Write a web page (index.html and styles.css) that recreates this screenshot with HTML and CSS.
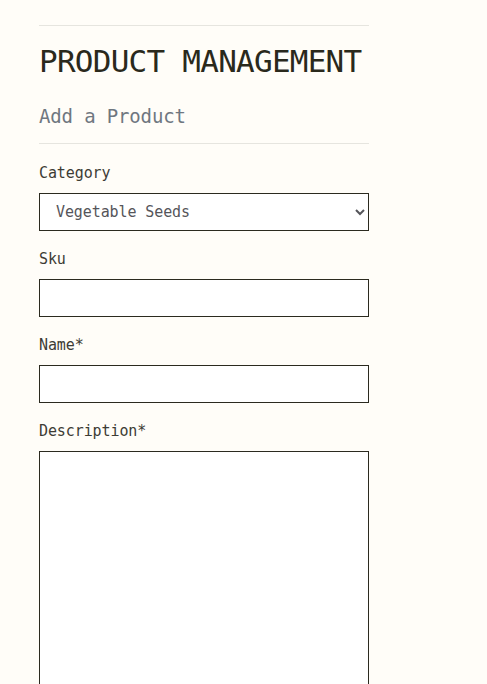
FILE: index.html
```html
<!DOCTYPE html>
<html lang="en">
<head>
<meta charset="utf-8">
<title>Product Management</title>
<link rel="stylesheet" href="styles.css">
</head>
<body>
<main class="page">
  <hr class="rule rule-top">
  <h1 class="title">PRODUCT MANAGEMENT</h1>
  <h2 class="subtitle">Add a Product</h2>
  <hr class="rule rule-mid">
  <form class="form">
    <div class="field">
      <label class="label" for="category">Category</label>
      <select class="control select" id="category">
        <option>Vegetable Seeds</option>
        <option>Flower Seeds</option>
        <option>Herb Seeds</option>
      </select>
    </div>
    <div class="field">
      <label class="label" for="sku">Sku</label>
      <input class="control" id="sku" type="text">
    </div>
    <div class="field">
      <label class="label" for="name">Name*</label>
      <input class="control" id="name" type="text">
    </div>
    <div class="field">
      <label class="label" for="desc">Description*</label>
      <textarea class="control area" id="desc"></textarea>
    </div>
  </form>
</main>
</body>
</html>
```
FILE: styles.css
```css
html, body {
  margin: 0;
  padding: 0;
  background: #fffdf8;
}
body {
  font-family: "DejaVu Sans Mono", "Liberation Mono", monospace;
  color: #2b2a1f;
}
.page {
  width: 330px;
  padding: 25px 0 0 39px;
  display: flex;
  flex-direction: column;
}
.rule {
  border: 0;
  height: 1px;
  background: #e6e5df;
  margin: 0;
  width: 100%;
}
.title {
  margin: 17px 0 0 0;
  font-size: 31px;
  line-height: 36px;
  letter-spacing: -0.75px;
  font-weight: normal;
  color: #2a291c;
}
.subtitle {
  margin: 25px 0 0 0;
  font-size: 19px;
  line-height: 24px;
  font-weight: normal;
  letter-spacing: -0.15px;
  color: #6f7780;
}
.rule-mid {
  margin-top: 15px;
}
.form {
  display: flex;
  flex-direction: column;
  gap: 18px;
  margin-top: 19px;
}
.field {
  display: flex;
  flex-direction: column;
  gap: 10px;
}
.label {
  font-size: 15px;
  line-height: 20px;
  letter-spacing: -0.1px;
  color: #3d3c35;
}
.control {
  box-sizing: border-box;
  width: 330px;
  height: 38px;
  margin: 0;
  border: 1px solid #2b2a1f;
  border-radius: 0;
  background: #ffffff;
  font-family: "DejaVu Sans Mono", "Liberation Mono", monospace;
  font-size: 15px;
  letter-spacing: -0.1px;
  color: #55555a;
  outline: none;
}
.select {
  padding: 0 8px 0 12px;
}
.area {
  height: 300px;
  resize: none;
  padding: 8px 12px;
}
```
